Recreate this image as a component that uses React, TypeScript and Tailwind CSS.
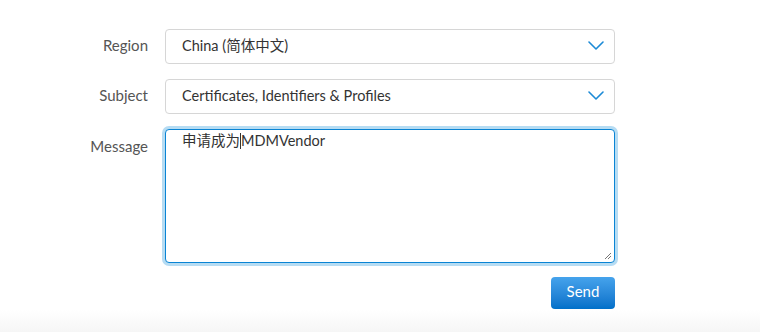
import React from 'react';

const font = { fontFamily: 'Lato, "Noto Sans CJK SC", sans-serif' };

const Chevron = () => (
  <svg width="16" height="9" viewBox="0 0 16 9" fill="none" className="shrink-0">
    <path d="M1 1l7 7 7-7" stroke="#1c8ad6" strokeWidth="1.6" strokeLinecap="round" strokeLinejoin="round" />
  </svg>
);

const SelectRow = ({ label, value }: { label: string; value: string }) => (
  <div className="flex items-center">
    <div className="w-[148px] pb-[2px] text-right text-[15px] text-[#555]">{label}</div>
    <div className="ml-[17px] flex h-[35px] w-[450px] items-center justify-between rounded-[4px] border border-[#d6d6d6] bg-white pb-[2px] pl-[16px] pr-[10px] text-[14.5px] text-[#333]">
      <span>{value}</span>
      <Chevron />
    </div>
  </div>
);

export default function App() {
  return (
    <div className="flex h-[332px] w-[760px] flex-col bg-white" style={font}>
      <div className="flex flex-col gap-[15px] pt-[29px]">
        <SelectRow label="Region" value="China (简体中文)" />
        <SelectRow label="Subject" value="Certificates, Identifiers & Profiles" />
        <div className="flex items-start">
          <div className="w-[148px] pt-[6px] text-right text-[15px] text-[#555]">Message</div>
          <div className="relative ml-[17px] h-[134px] w-[450px] rounded-[4px] border border-[#0a84d4] bg-white pl-[16px] text-[14.5px] leading-[22px] text-[#333] shadow-[0_0_0_3px_#b6dcf3]">
            <span>申请成为</span>
            <span className="inline-block h-[16px] w-px translate-y-[3px] bg-[#333]" />
            <span>MDMVendor</span>
            <svg width="8" height="8" viewBox="0 0 8 8" className="absolute bottom-[2px] right-[2px]">
              <path d="M1 7l6-6M4 7l3-3" stroke="#777" strokeWidth="1" />
            </svg>
          </div>
        </div>
      </div>
      <div className="mt-[14px] flex justify-end pr-[145px]">
        <button className="h-[32px] w-[64px] rounded-[4px] bg-gradient-to-b from-[#45a3ec] to-[#0070c9] pb-[3px] text-[15px] text-white">
          Send
        </button>
      </div>
      <div className="mt-auto h-[22px] bg-gradient-to-b from-white to-[#f6f6f6]" />
    </div>
  );
}
